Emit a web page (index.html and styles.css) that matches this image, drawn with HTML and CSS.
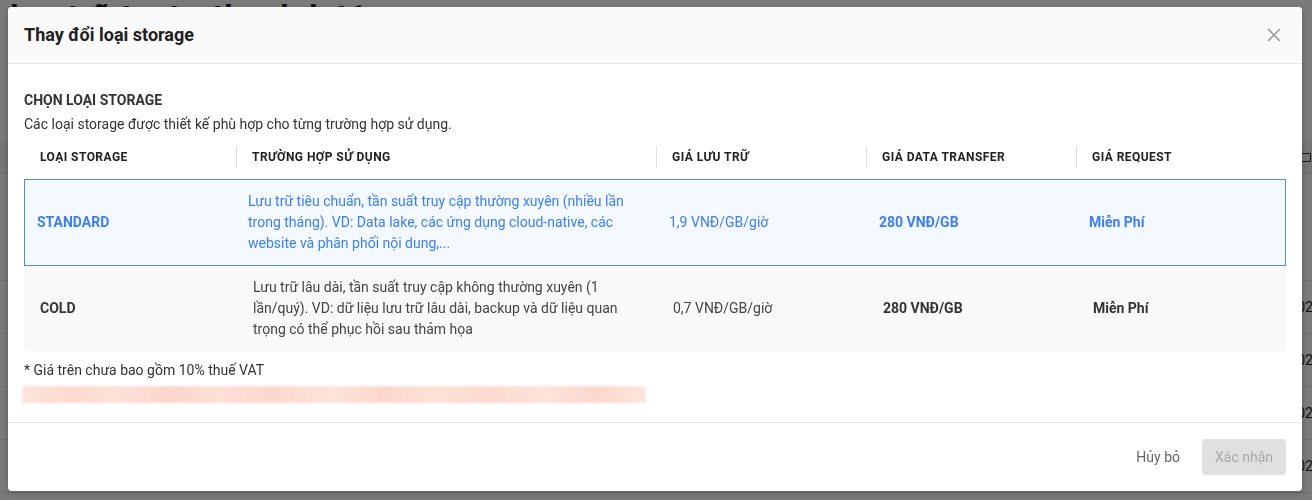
FILE: index.html
```html
<!DOCTYPE html>
<html lang="vi">
<head>
<meta charset="utf-8">
<title>Thay đổi loại storage</title>
<link rel="stylesheet" href="styles.css">
</head>
<body>
<div class="page">
  <h1 class="page-title">lưu trữ test - thanhdat1</h1>
  <div class="bg-table">
    <div class="bg-row bg-head"><span class="bg-icon"></span></div>
    <div class="bg-row bg-tall"></div>
    <div class="bg-row"><span>11/01/2024 10:02</span></div>
    <div class="bg-row"><span>11/01/2024 10:02</span></div>
    <div class="bg-row"><span>11/01/2024 10:02</span></div>
    <div class="bg-row"><span>11/01/2024 10:02</span></div>
  </div>
</div>

<div class="overlay">
  <div class="dialog">
    <div class="dialog-header">
      <h2 class="dialog-title">Thay đổi loại storage</h2>
      <button class="close-btn" aria-label="Đóng">
        <svg width="14" height="14" viewBox="0 0 14 14"><path d="M1 1L13 13M13 1L1 13" stroke="#9e9e9e" stroke-width="1.6" fill="none"/></svg>
      </button>
    </div>
    <div class="dialog-body">
      <div class="section-title">CHỌN LOẠI STORAGE</div>
      <div class="section-sub">Các loại storage được thiết kế phù hợp cho từng trường hợp sử dụng.</div>
      <div class="table">
        <div class="thead">
          <div class="th">LOẠI STORAGE</div>
          <div class="th sep">TRƯỜNG HỢP SỬ DỤNG</div>
          <div class="th sep">GIÁ LƯU TRỮ</div>
          <div class="th sep">GIÁ DATA TRANSFER</div>
          <div class="th sep">GIÁ REQUEST</div>
        </div>
        <div class="tr selected">
          <div class="td strong">STANDARD</div>
          <div class="td">Lưu trữ tiêu chuẩn, tần suất truy cập thường xuyên (nhiều lần trong tháng). VD: Data lake, các ứng dụng cloud-native, các website và phân phối nội dung,...</div>
          <div class="td">1,9 VNĐ/GB/giờ</div>
          <div class="td strong">280 VNĐ/GB</div>
          <div class="td strong">Miễn Phí</div>
        </div>
        <div class="tr plain">
          <div class="td strong">COLD</div>
          <div class="td">Lưu trữ lâu dài, tần suất truy cập không thường xuyên (1 lần/quý). VD: dữ liệu lưu trữ lâu dài, backup và dữ liệu quan trọng có thể phục hồi sau thảm họa</div>
          <div class="td">0,7 VNĐ/GB/giờ</div>
          <div class="td strong">280 VNĐ/GB</div>
          <div class="td strong">Miễn Phí</div>
        </div>
      </div>
      <div class="note">* Giá trên chưa bao gồm 10% thuế VAT</div>
      <div class="redacted"></div>
    </div>
    <div class="dialog-footer">
      <button class="btn-text">Hủy bỏ</button>
      <button class="btn-primary" disabled>Xác nhận</button>
    </div>
  </div>
</div>
</body>
</html>
```
FILE: styles.css
```css
* { box-sizing: border-box; }
html, body { margin: 0; padding: 0; }
body {
  width: 1312px;
  height: 500px;
  overflow: hidden;
  background: #ffffff;
  font-family: Roboto, "Noto Sans", Arial, sans-serif;
  color: #333;
}

/* background page */
.page { width: 1313px; }
.page-title {
  margin: -4px 0 0 10px;
  font-size: 32px;
  line-height: 40px;
  font-weight: 700;
  color: #222;
  letter-spacing: 1px;
}
.bg-table { margin-top: 106px; }
.bg-row {
  height: 53px;
  border-bottom: 1px solid #e4e4e4;
  display: flex;
  align-items: center;
  justify-content: flex-end;
  font-size: 14px;
  color: #222;
}
.bg-head { height: 32px; background: #f4f4f4; }
.bg-tall { height: 107px; }
.bg-icon {
  width: 12px; height: 9px;
  border: 1.5px solid #333;
  border-radius: 1px;
  margin-right: 2px;
}

/* overlay */
.overlay {
  position: fixed;
  inset: 0;
  background: rgba(0, 0, 0, 0.52);
  padding: 7px 10px 0 8px;
}
.dialog {
  width: 1294px;
  height: 484px;
  background: #fff;
  border-radius: 4px;
  display: flex;
  flex-direction: column;
  overflow: hidden;
  box-shadow: 0 2px 6px rgba(0,0,0,0.25);
}
.dialog-header {
  height: 57px;
  background: #fafafa;
  border-bottom: 1px solid #e6e6e6;
  display: flex;
  align-items: center;
  justify-content: space-between;
  padding: 0 21px 0 16px;
  flex-shrink: 0;
}
.dialog-title {
  margin: 0;
  font-size: 18px;
  font-weight: 700;
  color: #212121;
  line-height: 24px;
}
.close-btn {
  border: 0;
  background: none;
  padding: 0;
  width: 14px;
  height: 14px;
  display: flex;
}

.dialog-body {
  padding: 26px 16px 0 16px;
  height: 359px;
  border-bottom: 1px solid #e8e8e8;
  flex-shrink: 0;
}
.section-title {
  font-size: 14px;
  font-weight: 700;
  line-height: 20px;
  color: #333;
}
.section-sub {
  margin-top: 4px;
  font-size: 14px;
  line-height: 20px;
  color: #333;
}

.table { margin-top: 6px; width: 1262px; }
.thead, .tr {
  display: grid;
  grid-template-columns: 212px 420px 210px 210px 210px;
}
.thead { height: 34px; align-items: center; margin-bottom: 5px; }
.th {
  font-size: 12px;
  font-weight: 700;
  letter-spacing: 0.45px;
  color: #212121;
  padding-left: 16px;
  height: 22px;
  line-height: 22px;
}
.th.sep { border-left: 1px solid #e0e0e0; padding-left: 15px; }

.tr { align-items: center; }
.td {
  font-size: 14px;
  line-height: 21px;
  padding-left: 16px;
  padding-right: 24px;
}
.td.strong { font-weight: 700; }
.tr.selected {
  border: 1px solid #4f8af0;
  background: #f4f8ff;
  padding: 11px 0;
  color: #3d7ff2;
}
.tr.selected .td { padding-left: 12px; }
.tr.selected .td:nth-child(2) { padding-left: 11px; }
.tr.plain {
  background: #f9f9f9;
  padding: 11px 0;
  color: #444;
  border-radius: 0 0 4px 4px;
}
.tr.plain .td { padding-left: 17px; }
.tr.plain .td:first-child { padding-left: 16px; }
.tr.plain .td.strong { color: #333; }

.note {
  margin-top: 9px;
  font-size: 14px;
  line-height: 20px;
  color: #333;
}
.redacted {
  margin: 6px 0 0 -2px;
  width: 624px;
  height: 17px;
  background: linear-gradient(90deg, #fde4dd 0%, #fcd9cf 8%, #fde2da 15%, #fbd6cb 24%, #fde0d8 32%, #fcd8cd 40%, #fde4dc 50%, #fbd7cc 58%, #fde1d9 66%, #fcdace 75%, #fde3dc 84%, #fbd8cd 92%, #fde5de 100%);
  filter: blur(1px);
}

.dialog-footer {
  flex: 1;
  display: flex;
  align-items: center;
  justify-content: flex-end;
  padding: 0 16px;
  gap: 6px;
}
.btn-text {
  border: 0;
  background: none;
  font-family: inherit;
  font-size: 14px;
  color: #666;
  height: 36px;
  padding: 0 16px;
}
.btn-primary {
  border: 0;
  background: #e0e0e0;
  border-radius: 4px;
  font-family: inherit;
  font-size: 14px;
  color: #a8a8a8;
  height: 36px;
  padding: 0 13px;
  width: 84px;
}
```
